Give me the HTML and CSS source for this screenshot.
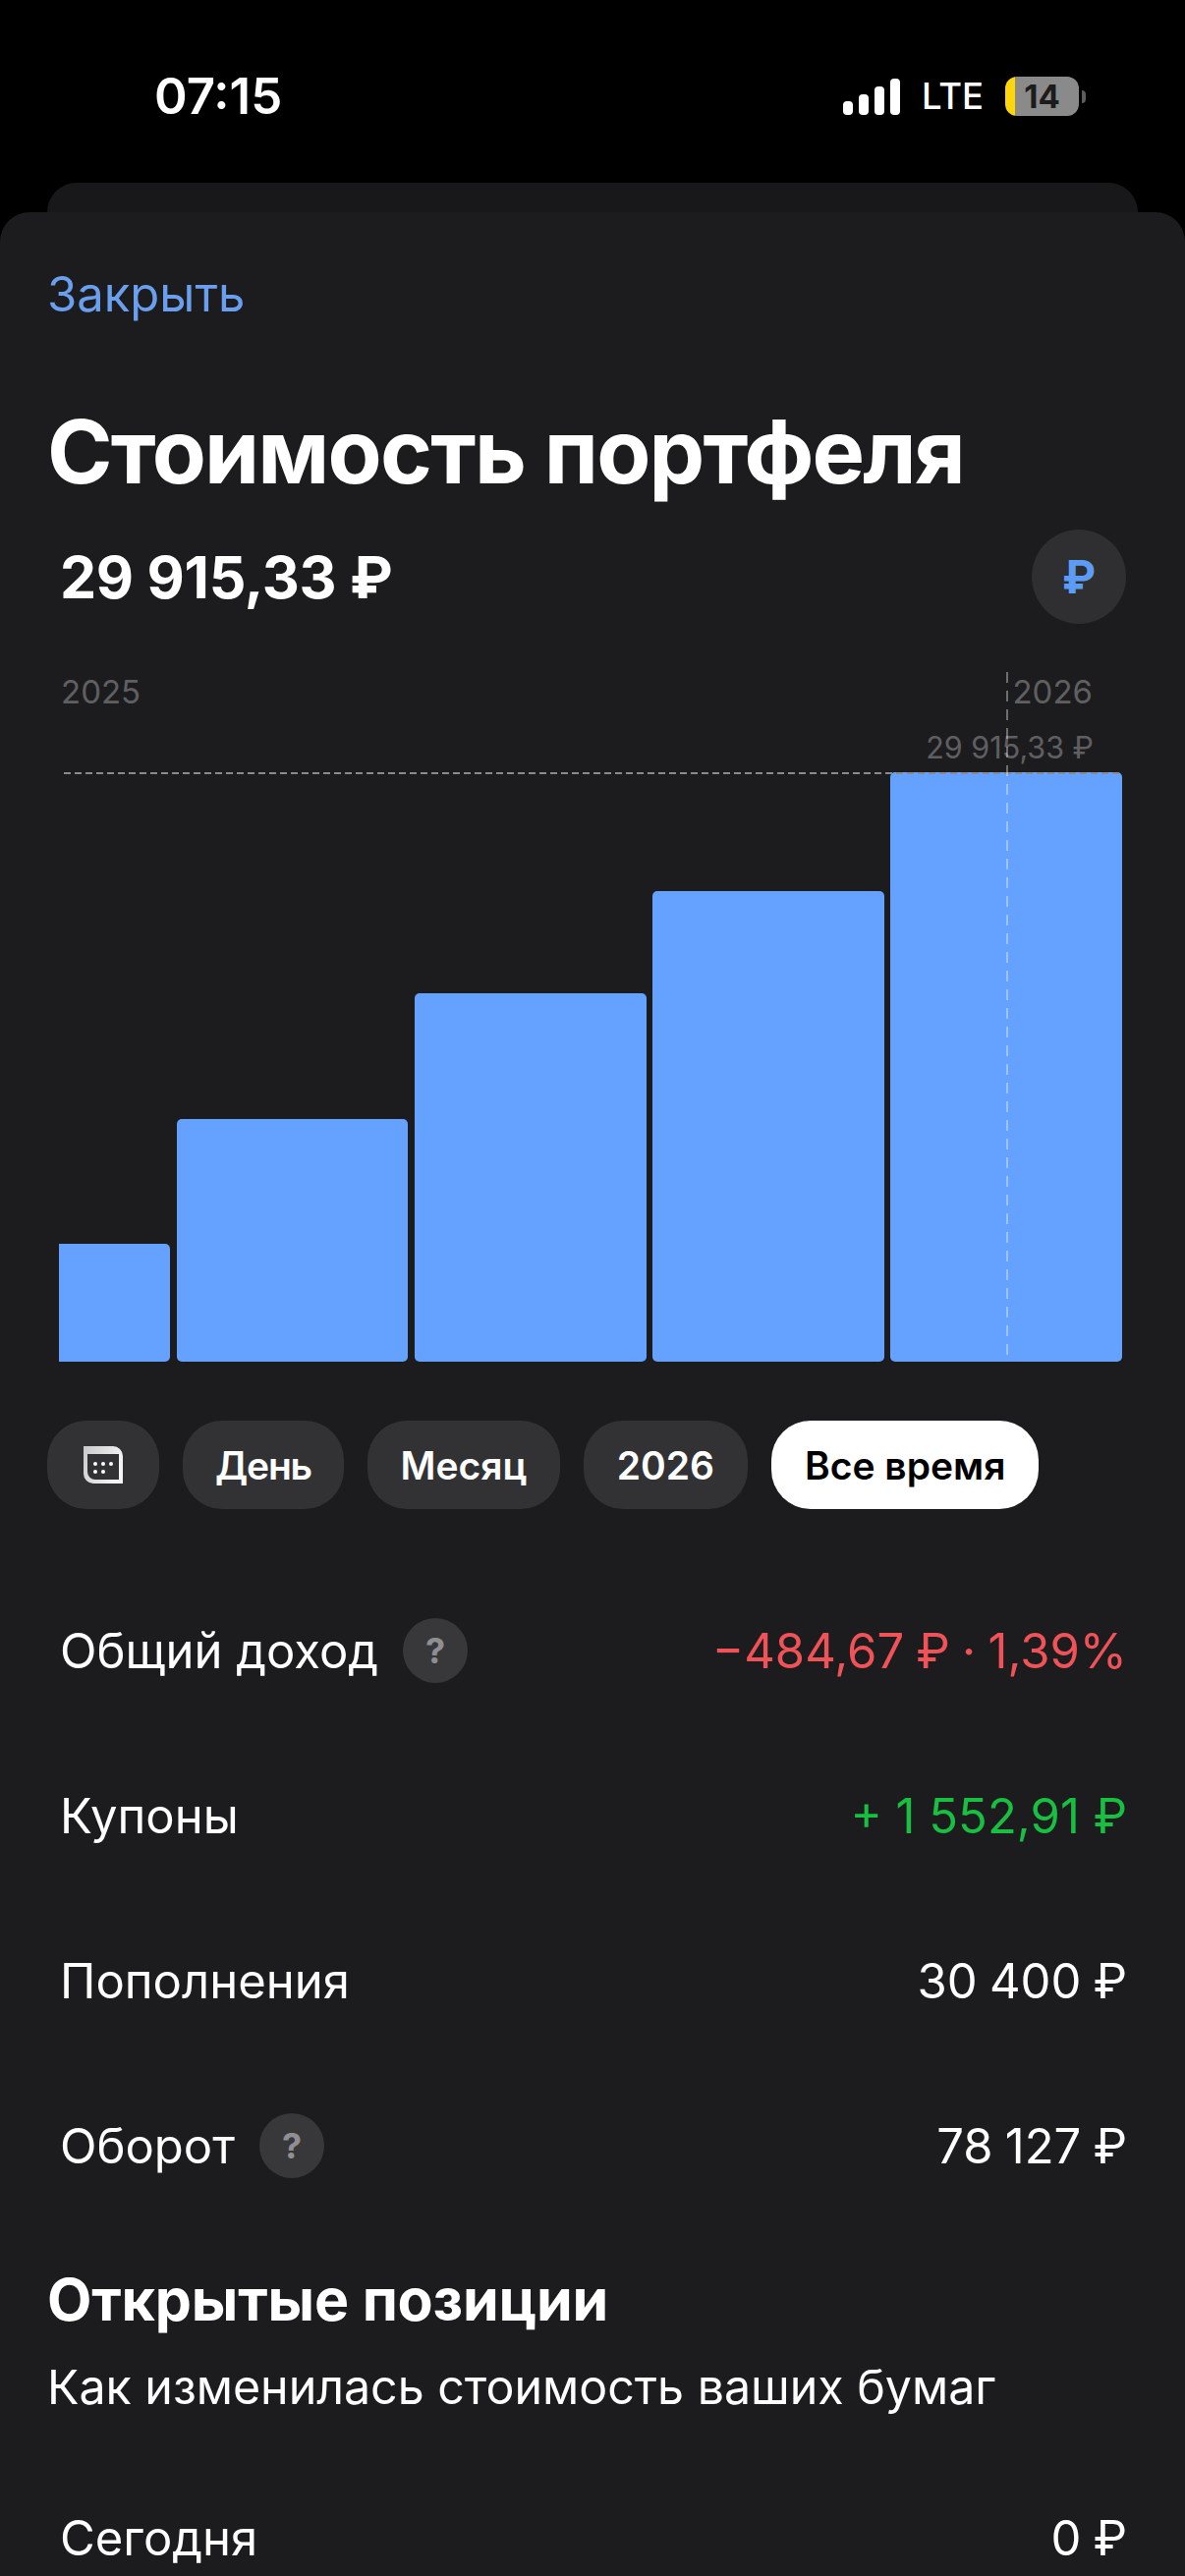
FILE: index.html
```html
<!DOCTYPE html>
<html lang="ru">
<head>
  <meta charset="UTF-8" />
  <meta name="viewport" content="width=device-width, initial-scale=1.0"/>
  <title>Стоимость портфеля</title>
  <link rel="stylesheet" href="styles.css">
</head>
<body>
  <header class="status-bar">
    <div class="status-time">07:15</div>
    <div class="status-right">
      <div class="signal">
        <span class="signal-bar signal-bar-1"></span>
        <span class="signal-bar signal-bar-2"></span>
        <span class="signal-bar signal-bar-3"></span>
        <span class="signal-bar signal-bar-4"></span>
      </div>
      <div class="network">LTE</div>
      <div class="battery">
        <div class="battery-body">14</div>
        <div class="battery-nub"></div>
      </div>
    </div>
  </header>

  <div class="back-sheet"></div>

  <main class="sheet">
    <a class="close-link">Закрыть</a>
    <h1 class="title">Стоимость портфеля</h1>

    <div class="total-row">
      <div class="total-value">29 915,33 ₽</div>
      <div class="currency-button">₽</div>
    </div>

    <section class="chart">
      <div class="chart-years">
        <span>2025</span>
        <span>2026</span>
      </div>
      <div class="chart-max">29 915,33 ₽</div>
      <div class="chart-bars">
        <div class="bar bar-first" style="height: 120px"></div>
        <div class="bar" style="height: 247px"></div>
        <div class="bar" style="height: 375px"></div>
        <div class="bar" style="height: 479px"></div>
        <div class="bar" style="height: 600px"></div>
      </div>
      <div class="chart-line-h"></div>
      <div class="chart-line-v"></div>
    </section>

    <nav class="periods">
      <div class="chip chip-icon">
        <svg width="40" height="38" viewBox="0 0 40 38">
          <defs>
            <linearGradient id="calendar-top" x1="0" y1="0" x2="1" y2="0.4">
              <stop offset="0" stop-color="#c9c9ca"/>
              <stop offset="1" stop-color="#f4f4f4"/>
            </linearGradient>
          </defs>
          <path d="M0 0H30A10 10 0 0 1 40 10V38H10A10 10 0 0 1 0 28Z" fill="url(#calendar-top)"/>
          <path d="M4 8H36V34H12A8 8 0 0 1 4 26Z" fill="#323234"/>
          <circle cx="12" cy="18" r="2" fill="#fff"/>
          <circle cx="20" cy="18" r="2" fill="#fff"/>
          <circle cx="28" cy="18" r="2" fill="#fff"/>
          <circle cx="12" cy="26" r="2" fill="#fff"/>
          <circle cx="20" cy="26" r="2" fill="#fff"/>
        </svg>
      </div>
      <div class="chip chip-day">День</div>
      <div class="chip chip-month">Месяц</div>
      <div class="chip">2026</div>
      <div class="chip chip-active">Все время</div>
    </nav>

    <section class="stats">
      <div class="stat-row">
        <div class="stat-label">Общий доход <span class="help">?</span></div>
        <div class="stat-value negative">−484,67 ₽ · 1,39%</div>
      </div>
      <div class="stat-row">
        <div class="stat-label">Купоны</div>
        <div class="stat-value positive">+ 1 552,91 ₽</div>
      </div>
      <div class="stat-row">
        <div class="stat-label">Пополнения</div>
        <div class="stat-value">30 400 ₽</div>
      </div>
      <div class="stat-row">
        <div class="stat-label">Оборот <span class="help">?</span></div>
        <div class="stat-value">78 127 ₽</div>
      </div>
    </section>

    <h2 class="section-title">Открытые позиции</h2>
    <p class="section-note">Как изменилась стоимость ваших бумаг</p>

    <div class="stat-row stat-row-today">
      <div class="stat-label">Сегодня</div>
      <div class="stat-value">0 ₽</div>
    </div>
  </main>
</body>
</html>
```

FILE: styles.css
```css
html, body {
  height: 2622px;
  overflow: hidden;
}
body {
  font-family: 'Inter', 'Roboto', sans-serif;
  background: #000;
  margin: 0;
  padding: 0;
  color: #fff;
}
.status-bar {
  height: 186px;
  box-sizing: border-box;
  padding: 70px 101px 0 157px;
  display: flex;
  justify-content: space-between;
  align-items: flex-start;
}
.status-time {
  font-size: 51px;
  line-height: 56px;
  font-weight: 600;
}
.status-right {
  display: flex;
  align-items: center;
  height: 56px;
}
.signal {
  display: flex;
  align-items: flex-end;
  gap: 6px;
  margin-right: 22px;
}
.signal-bar {
  width: 10px;
  background: #fff;
  border-radius: 4px;
}
.signal-bar-1 { height: 14px; }
.signal-bar-2 { height: 21px; }
.signal-bar-3 { height: 29px; }
.signal-bar-4 { height: 37px; }
.network {
  font-size: 36.5px;
  font-weight: 500;
  margin-right: 22px;
}
.battery {
  display: flex;
  align-items: center;
  gap: 3px;
}
.battery-body {
  width: 75px;
  height: 40px;
  box-sizing: border-box;
  border-radius: 12px;
  background: linear-gradient(to right, #ffd60a 10px, #8a8a8a 10px);
  color: #1c1c1c;
  font-size: 33px;
  line-height: 40px;
  font-weight: 700;
  text-align: center;
}
.battery-nub {
  width: 4px;
  height: 13px;
  background: #5c5c5c;
  border-radius: 0 4px 4px 0;
}
.back-sheet {
  height: 30px;
  margin: 0 48px;
  background: #18181b;
  border-radius: 30px 30px 0 0;
}
.sheet {
  background: #1c1c1e;
  border-radius: 30px 30px 0 0;
  height: 2406px;
  box-sizing: border-box;
  padding: 48px 48px 0;
}
.close-link {
  display: block;
  color: #6a9fee;
  font-size: 49px;
  line-height: 72px;
}
.title {
  margin: 72px 0 0;
  font-size: 90px;
  line-height: 104px;
  font-weight: 700;
  letter-spacing: -1.8px;
}
.total-row {
  display: flex;
  justify-content: space-between;
  align-items: center;
  padding: 0 12px 0 13px;
  margin-top: 27px;
}
.total-value {
  font-size: 59px;
  font-weight: 700;
  letter-spacing: -0.3px;
}
.currency-button {
  width: 96px;
  height: 96px;
  border-radius: 50%;
  background: #2f2f32;
  color: #5d9cf5;
  font-size: 46px;
  font-weight: 700;
  display: flex;
  justify-content: center;
  align-items: center;
}
.chart {
  position: relative;
  margin-top: 49px;
  height: 702px;
  margin-left: 12px;
  margin-right: 16px;
}
.chart-years {
  display: flex;
  justify-content: space-between;
  padding: 0 30px 0 2px;
  color: #5f5f62;
  font-size: 33px;
  line-height: 40px;
}
.chart-max {
  color: #5f5f62;
  font-size: 30.5px;
  line-height: 38px;
  text-align: right;
  padding-right: 29px;
  margin-top: 18px;
}
.chart-bars {
  display: flex;
  align-items: flex-end;
  gap: 6.5px;
  height: 600px;
  margin-top: 6px;
}
.bar {
  flex: 1;
  background: #65a2ff;
  border-radius: 5px;
}
.bar-first {
  flex: 0 0 113px;
  border-radius: 0 5px 5px 0;
}
.chart-line-h {
  position: absolute;
  left: 5px;
  right: 0;
  top: 102px;
  height: 2px;
  background: repeating-linear-gradient(to right, #8a8a8d 0 7px, transparent 7px 11px);
}
.chart-line-v {
  position: absolute;
  left: 964px;
  top: 0;
  bottom: 0;
  width: 2px;
  background: repeating-linear-gradient(to bottom, rgba(255, 255, 255, 0.36) 0 11px, transparent 11px 19px);
}
.periods {
  display: flex;
  gap: 24px;
  margin-top: 60px;
}
.chip {
  height: 90px;
  padding: 0 34px;
  border-radius: 40px;
  background: #323234;
  font-size: 39px;
  font-weight: 600;
  display: flex;
  align-items: center;
}
.chip-day {
  padding: 0 33px;
  letter-spacing: -1.2px;
}
.chip-month {
  padding: 0 33.5px;
}
.chip-icon {
  width: 114px;
  padding: 0;
  box-sizing: border-box;
  justify-content: center;
}
.chip-active {
  background: #fff;
  color: #000;
}
.stats {
  margin-top: 60px;
}
.stat-row {
  height: 168px;
  padding: 0 11px 0 13px;
  display: flex;
  justify-content: space-between;
  align-items: center;
}
.stat-row-today {
  margin-top: 37px;
}
.stat-label {
  font-size: 49px;
  display: flex;
  align-items: center;
  gap: 25px;
}
.stat-value {
  font-size: 49px;
  word-spacing: -1.5px;
}
.negative {
  color: #ef5257;
}
.positive {
  color: #18bf40;
  word-spacing: 0;
}
.help {
  width: 66px;
  height: 66px;
  border-radius: 50%;
  background: #38383b;
  color: #8e8e93;
  font-size: 36px;
  font-weight: 700;
  display: flex;
  justify-content: center;
  align-items: center;
}
.section-title {
  margin: 38px 0 0;
  font-size: 59px;
  line-height: 70px;
  font-weight: 700;
  letter-spacing: -0.2px;
}
.section-note {
  margin: 22px 0 0;
  font-size: 48.3px;
  line-height: 64px;
}
```
